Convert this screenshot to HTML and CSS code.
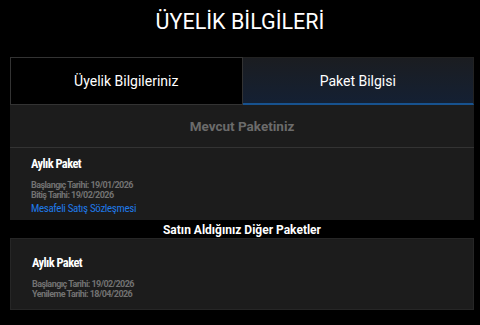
FILE: index.html
```html
<!DOCTYPE html>
<html lang="tr">
<head>
    <meta charset="UTF-8">
    <meta name="viewport" content="width=device-width, initial-scale=1.0">
    <title>Üyelik Bilgileri</title>
    <link rel="stylesheet" href="styles.css">
</head>
<body>

    <h1 class="page-title">ÜYELİK BİLGİLERİ</h1>

    <div class="wrap">
        <div class="tabs">
            <div class="tab">Üyelik Bilgileriniz</div>
            <div class="tab active">Paket Bilgisi</div>
        </div>

        <div class="card current">
            <div class="card-head">Mevcut Paketiniz</div>
            <div class="package">
                <div class="package-name">Aylık Paket</div>
                <div class="package-dates">
                    <div>Başlangıç Tarihi: 19/01/2026</div>
                    <div>Bitiş Tarihi: 19/02/2026</div>
                </div>
                <a class="contract-link" href="#">Mesafeli Satış Sözleşmesi</a>
            </div>
        </div>

        <div class="section-title">Satın Aldığınız Diğer Paketler</div>

        <div class="card other">
            <div class="package">
                <div class="package-name">Aylık Paket</div>
                <div class="package-dates">
                    <div>Başlangıç Tarihi: 19/02/2026</div>
                    <div>Yenileme Tarihi: 18/04/2026</div>
                </div>
            </div>
        </div>
    </div>

</body>
</html>
```

FILE: styles.css
```css
* {
    margin: 0;
    padding: 0;
    box-sizing: border-box;
    font-family: Roboto, "Liberation Sans", sans-serif;
}

body {
    background-color: #000;
    color: #fff;
}

.page-title {
    height: 57px;
    padding-top: 8px;
    text-align: center;
    font-size: 21.5px;
    font-weight: 400;
    line-height: 28px;
}

.wrap {
    margin: 0 6px 0 10px;
}

/* Tabs */
.tabs {
    display: flex;
    height: 48px;
}

.tab {
    flex: 1;
    display: flex;
    justify-content: center;
    align-items: center;
    font-size: 14px;
    color: #fff;
    border: 1px solid #333;
    background: #000;
}

.tab.active {
    border: 1px solid #222;
    border-left: none;
    border-bottom: 2px solid #17528f;
    background: linear-gradient(to bottom, #1b1d21, #142033);
    padding-top: 1px;
}

/* Cards */
.card {
    background: #1c1c1c;
}

.card-head {
    height: 43px;
    display: flex;
    justify-content: center;
    align-items: center;
    font-size: 13.5px;
    font-weight: 700;
    color: #6b6b6b;
    border-bottom: 1px solid #333;
}

.package {
    padding: 8px 21px 0;
}

.package-name,
.package-dates,
.contract-link {
    font-family: "Roboto Condensed", Roboto, "Liberation Sans", sans-serif;
}

.package-name {
    font-size: 12.5px;
    font-weight: 700;
    line-height: 16px;
    letter-spacing: -0.6px;
}

.package-dates {
    margin-top: 8px;
    font-size: 9px;
    line-height: 10px;
    color: #727272;
    font-weight: 700;
    letter-spacing: -0.55px;
}

.contract-link {
    display: block;
    margin-top: 2px;
    font-size: 11px;
    line-height: 14px;
    color: #1f7ae8;
    text-decoration: none;
    letter-spacing: -0.35px;
}

.card.current {
    height: 115px;
}

.section-title {
    height: 18px;
    padding-top: 1px;
    display: flex;
    justify-content: center;
    align-items: center;
    font-size: 12px;
    font-weight: 700;
}

.card.other {
    height: 72px;
    border: 1px solid #262626;
}

.card.other .package {
    padding-top: 16px;
}
```
